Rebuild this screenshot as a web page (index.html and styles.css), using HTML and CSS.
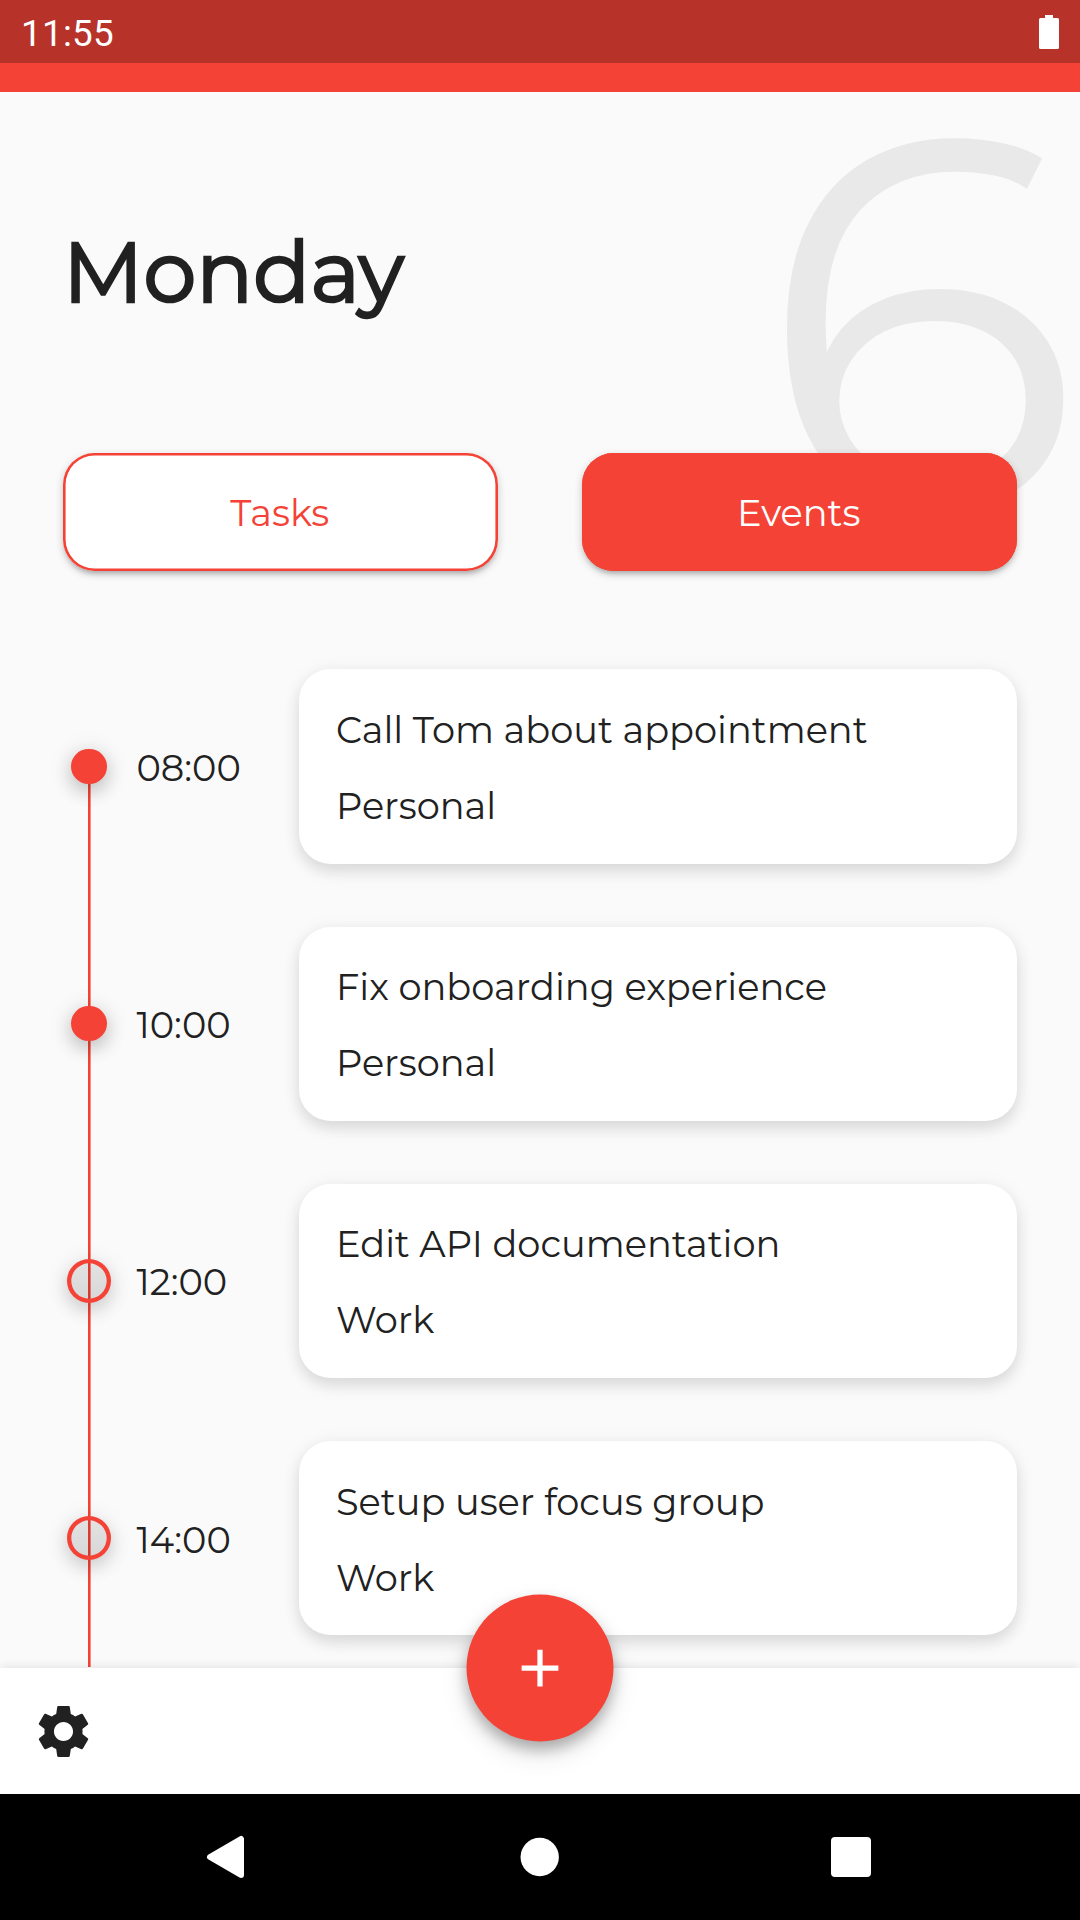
FILE: index.html
```html
<!DOCTYPE html>
<html lang="en">
<head>
<meta charset="utf-8">
<title>Monday</title>
<link rel="stylesheet" href="styles.css">
</head>
<body>
<div class="screen">
  <div class="status">
    <span class="clock">11:55</span>
    <svg class="battery" width="20" height="34" viewBox="0 0 20 34"><path fill="#fff" d="M6 0h8v3h4.500q1.500 0 1.500 1.500v28q0 1.500-1.500 1.500h-17q-1.500 0-1.500-1.500v-28q0-1.500 1.500-1.500h4.500z"/></svg>
  </div>
  <div class="accent"></div>
  <main class="content">
    <div class="date">6</div>
    <h1 class="day">Monday</h1>
    <div class="tabs">
      <button class="tab">Tasks</button>
      <button class="tab active">Events</button>
    </div>
    <ul class="timeline">
      <li class="row first">
        <div class="rail"><i class="dot"></i></div>
        <span class="time">08:00</span>
        <div class="card"><p>Call Tom about appointment</p><p>Personal</p></div>
      </li>
      <li class="row">
        <div class="rail"><i class="dot"></i></div>
        <span class="time">10:00</span>
        <div class="card"><p>Fix onboarding experience</p><p>Personal</p></div>
      </li>
      <li class="row">
        <div class="rail"><i class="dot ring"></i></div>
        <span class="time">12:00</span>
        <div class="card"><p>Edit API documentation</p><p>Work</p></div>
      </li>
      <li class="row">
        <div class="rail"><i class="dot ring"></i></div>
        <span class="time">14:00</span>
        <div class="card"><p>Setup user focus group</p><p>Work</p></div>
      </li>
    </ul>
  </main>
  <footer class="appbar">
    <svg class="gear" width="61" height="61" viewBox="0 0 24 24"><path fill="#212121" d="M19.430 12.980c.040-.320.070-.640.070-.980s-.030-.660-.070-.980l2.110-1.650c.190-.150.240-.420.120-.640l-2-3.460c-.120-.220-.390-.300-.610-.220l-2.490 1c-.520-.400-1.080-.730-1.690-.980l-.380-2.650C14.460 2.180 14.250 2 14 2h-4c-.250 0-.460.180-.490.420l-.380 2.650c-.610.250-1.170.590-1.690.980l-2.490-1c-.230-.090-.490 0-.610.220l-2 3.460c-.130.220-.070.490.120.640l2.110 1.650c-.040.320-.070.650-.070.980s.030.660.070.980l-2.110 1.650c-.190.150-.240.420-.120.640l2 3.460c.120.220.390.300.610.220l2.490-1c.520.400 1.080.730 1.690.980l.380 2.650c.030.240.240.420.490.420h4c.250 0 .460-.180.490-.420l.380-2.650c.610-.250 1.170-.590 1.690-.980l2.490 1c.230.090.490 0 .610-.220l2-3.460c.120-.220.070-.490-.120-.640l-2.110-1.650zM12 15.750c-2.070 0-3.750-1.680-3.750-3.750s1.680-3.750 3.750-3.750 3.750 1.680 3.750 3.750-1.680 3.750-3.750 3.750z"/></svg>
    <button class="fab" aria-label="Add"><svg width="63" height="63" viewBox="0 0 24 24"><path fill="#fff" d="M19 13h-6v6h-2v-6H5v-2h6V5h2v6h6v2z"/></svg></button>
  </footer>
  <nav class="sysnav">
    <svg width="44" height="44" viewBox="0 0 44 44"><path fill="#fff" stroke="#fff" stroke-width="6" stroke-linejoin="round" d="M6 22L37 4v36z"/></svg>
    <svg width="44" height="44" viewBox="0 0 44 44"><circle cx="22.700" cy="22" r="19.200" fill="#fff"/></svg>
    <svg width="44" height="44" viewBox="0 0 44 44"><rect x="2" y="2" width="40" height="40" rx="4" fill="#fff"/></svg>
  </nav>
</div>
</body>
</html>
```
FILE: styles.css
```css
* { box-sizing: border-box; margin: 0; padding: 0; }

body {
  background: #fafafa;
  color: #212121;
  font-family: "Montserrat", "Inter", sans-serif;
  font-size: 36.75px;
  font-weight: 400;
}

button { border: 0; font: inherit; }

.screen {
  display: flex;
  flex-direction: column;
  width: 1080px;
  height: 1920px;
  overflow: hidden;
}

.status {
  display: flex;
  justify-content: space-between;
  align-items: center;
  flex: none;
  height: 63px;
  padding: 0 21px;
  background: #b73229;
}

.clock {
  color: #fff;
  font: 400 36.75px/63px "Roboto", sans-serif;
  letter-spacing: 0.3px;
  padding-top: 4px;
}

.accent { flex: none; height: 28.800px; background: #f44336; }

.content {
  position: relative;
  flex: 1;
  min-height: 0;
  padding: 0 63px;
  overflow: hidden;
}

.date {
  position: absolute;
  right: 0.5px;
  top: 29.500px;
  color: rgba(33, 33, 33, 0.08);
  font-size: 525px;
  line-height: 400px;
}

/* The heading is a regular cut thickened by a thin outline. */
.day {
  position: relative;
  padding-top: 125px;
  height: 361px;
  font-size: 84px;
  font-weight: 400;
  line-height: 110px;
  letter-spacing: 0.2px;
  -webkit-text-stroke: 2.500px #212121;
}

.tabs { position: relative; display: flex; gap: 84px; }

.tab {
  flex: 1;
  height: 118px;
  padding: 2px 1.500px 0 0;
  border-radius: 31.500px;
  background: #fff;
  color: #f44336;
  box-shadow: inset 0 0 0 2.600px #f44336, 0 5px 5px -3px rgba(0, 0, 0, 0.2), 0 3px 8px rgba(0, 0, 0, 0.2);
}

.tab.active { background: #f44336; color: #fff; }

.timeline { list-style: none; padding-top: 67px; }

.row {
  display: grid;
  grid-template-columns: 52px 184px 1fr;
  align-items: center;
  height: 257.250px;
}

.rail {
  display: grid;
  place-items: center;
  align-self: stretch;
  background: linear-gradient(#f44336, #f44336) 25px 0 / 2.600px 100% no-repeat;
}

.first .rail { background-position: 25px 128px; }

.dot {
  width: 35.400px;
  height: 35.400px;
  border-radius: 50%;
  background: #f44336;
  box-shadow: 0 8px 18px rgba(0, 0, 0, 0.16), 0 3px 24px rgba(0, 0, 0, 0.14);
}

.dot.ring {
  width: 44px;
  height: 44px;
  background: linear-gradient(rgba(0, 0, 0, 0.09), rgba(0, 0, 0, 0.14));
  box-shadow: inset 0 0 0 4.300px #f44336, 0 8px 18px rgba(0, 0, 0, 0.13), 0 3px 24px rgba(0, 0, 0, 0.1);
}

.time { padding: 2px 0 0 21.500px; }

.card {
  height: 194.250px;
  padding: 22.600px 37px;
  border-radius: 31.500px;
  background: #fff;
  box-shadow: 0 8px 15px rgba(0, 0, 0, 0.1), 0 2px 20px rgba(0, 0, 0, 0.06);
}

.card p { line-height: 76px; white-space: nowrap; }

.appbar {
  position: relative;
  flex: none;
  height: 126px;
  padding: 33px 32.500px;
  background: #fff;
  box-shadow: 0 0 10px rgba(0, 0, 0, 0.12);
}

.gear { display: block; }

.fab {
  position: absolute;
  left: 50%;
  top: 0;
  display: grid;
  place-items: center;
  width: 147px;
  height: 147px;
  border-radius: 50%;
  background: #f44336;
  transform: translate(-50%, -50%);
  box-shadow: 0 8px 14px rgba(0, 0, 0, 0.26), 0 12px 28px rgba(0, 0, 0, 0.12);
}

.sysnav {
  position: relative;
  display: flex;
  justify-content: space-between;
  align-items: center;
  flex: none;
  height: 126px;
  padding: 0 207px 0 204px;
  background: #000;
}
```
